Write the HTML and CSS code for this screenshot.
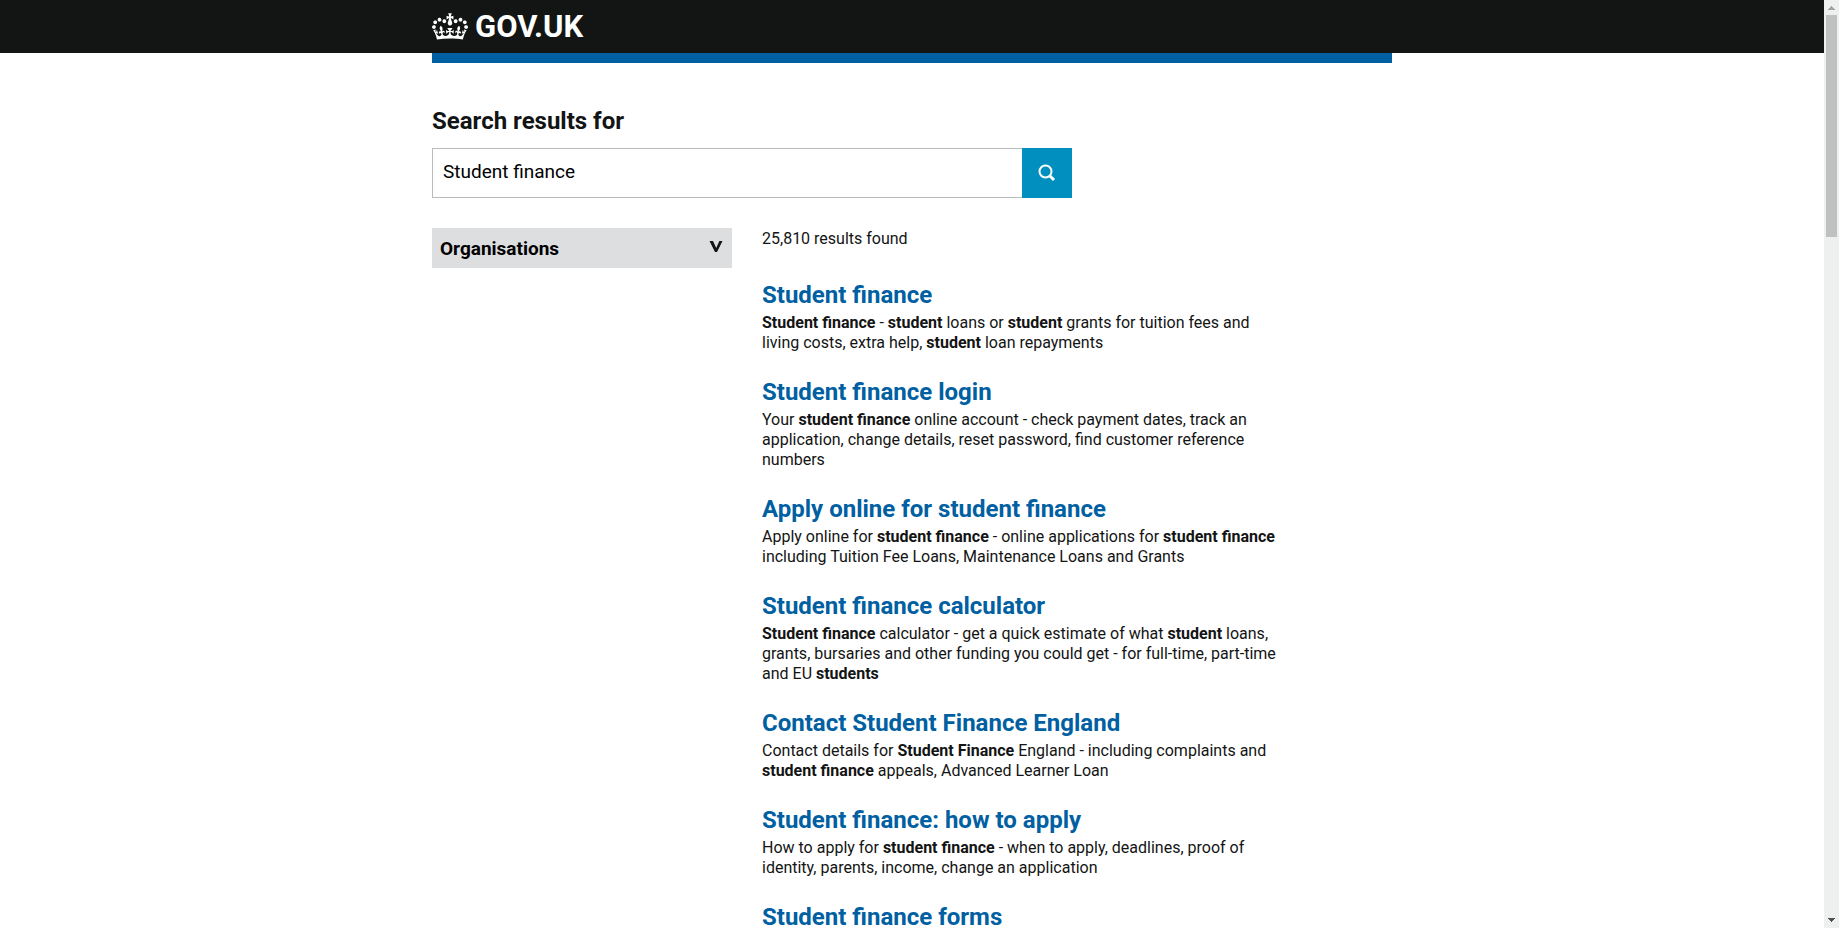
FILE: index.html
```html
<!DOCTYPE html>
<html lang="en">
<head>
<meta charset="utf-8">
<title>Student finance - Search - GOV.UK</title>
<link rel="stylesheet" href="styles.css">
</head>
<body>
<div class="page">
  <header class="header">
    <div class="container header-inner">
      <a class="logo" href="#">
        <svg class="crown" viewBox="0 0 132 97" aria-hidden="true"><path fill="currentColor" fill-rule="evenodd" d="M25 30.2c3.5 1.5 7.7-.2 9.1-3.7 1.5-3.6-.2-7.8-3.9-9.2-3.6-1.4-7.6.3-9.1 3.9-1.4 3.5.3 7.5 3.9 9zM9 39.5c3.6 1.5 7.8-.2 9.2-3.7 1.5-3.6-.2-7.8-3.9-9.1-3.6-1.5-7.6.2-9.1 3.8-1.4 3.5.3 7.5 3.8 9zM4.4 57.2c3.5 1.5 7.7-.2 9.1-3.8 1.5-3.6-.2-7.7-3.9-9.1-3.5-1.5-7.6.3-9.1 3.8-1.4 3.5.3 7.6 3.9 9.1zm38.3-21.4c3.5 1.5 7.7-.2 9.1-3.8 1.5-3.6-.2-7.7-3.9-9.1-3.6-1.5-7.6.3-9.1 3.8-1.3 3.6.4 7.7 3.9 9.1zm64.4-5.6c-3.6 1.5-7.8-.2-9.1-3.7-1.5-3.6.2-7.8 3.8-9.2 3.6-1.4 7.7.3 9.2 3.9 1.3 3.5-.4 7.5-3.9 9zm15.9 9.3c-3.6 1.5-7.7-.2-9.1-3.7-1.5-3.6.2-7.8 3.7-9.1 3.6-1.5 7.7.2 9.2 3.8 1.5 3.5-.3 7.5-3.8 9zm4.7 17.7c-3.6 1.5-7.8-.2-9.2-3.8-1.5-3.6.2-7.7 3.9-9.1 3.6-1.5 7.7.3 9.2 3.8 1.3 3.5-.4 7.6-3.9 9.1zM89.3 35.8c-3.6 1.5-7.8-.2-9.2-3.8-1.4-3.6.2-7.7 3.9-9.1 3.6-1.5 7.7.3 9.2 3.8 1.4 3.6-.3 7.7-3.9 9.1zM69.7 17.7l8.9 4.7V9.3l-8.9 2.8c-.2-.3-.5-.6-.9-.9L72.4 0H59.6l3.5 11.2c-.3.3-.6.5-.9.9l-8.8-2.8v13.1l8.8-4.7c.3.3.6.7.9.9l-5 15.4v.1c-.2.8-.4 1.6-.4 2.4 0 4.1 3.1 7.5 7 8.1h.2c.3 0 .7.1 1 .1.4 0 .7 0 1-.1h.2c4-.6 7.1-4.1 7.1-8.1 0-.8-.1-1.7-.4-2.4V34l-5.1-15.4c.4-.2.7-.6 1-.9zM66 92.8c16.9 0 32.8 1.1 47.1 3.2 4-16.9 8.9-26.7 14-33.5l-9.6-3.4c1 4.9 1.1 7.2 0 10.2-1.5-1.4-3-4.3-4.2-8.7L108.6 76c2.8-2 5-3.2 7.5-3.3-4.4 9.4-10 11.9-13.6 11.2-4.3-.8-6.3-4.6-5.6-7.9 1-4.7 5.7-5.9 8-.5 4.3-8.7-3-11.4-7.6-8.8 7.1-7.2 7.9-13.5 2.1-21.1-8 6.1-8.1 12.3-4.5 20.8-4.7-5.4-12.1-2.5-9.5 6.2 3.4-5.2 7.9-2 7.2 3.1-.6 4.3-6.4 7.8-13.5 7.2-10.3-.9-10.9-8-11.2-13.8 2.5-.5 7.1 1.8 11 7.3L80.2 60c-4.1 4.4-8 5.3-12.3 5.4 1.4-4.4 8-11.6 8-11.6H55.5s6.4 7.2 7.9 11.6c-4.2-.1-8-1-12.3-5.4l1.4 16.4c3.9-5.5 8.5-7.7 10.9-7.3-.3 5.8-.9 12.8-11.1 13.8-7.2.6-12.9-2.9-13.5-7.2-.7-5 3.8-8.3 7.1-3.1 2.7-8.7-4.6-11.6-9.4-6.2 3.7-8.5 3.6-14.7-4.6-20.8-5.8 7.6-5 13.9 2.2 21.1-4.7-2.6-11.9.1-7.7 8.8 2.3-5.5 7.1-4.2 8.1.5.7 3.3-1.3 7.1-5.7 7.9-3.5.7-9-1.8-13.5-11.2 2.5.1 4.7 1.3 7.5 3.3l-4.7-15.4c-1.2 4.4-2.7 7.2-4.3 8.7-1.1-3-.9-5.3 0-10.2l-9.5 3.4c5 6.9 9.9 16.7 14 33.5 14.8-2.1 30.8-3.2 47.7-3.2z"/></svg>
        <span>GOV.UK</span>
      </a>
    </div>
  </header>
  <div class="container"><div class="header-bar"></div></div>

  <main class="container main">
    <form class="search" role="search">
      <h1 class="search-title"><label for="q">Search results for</label></h1>
      <div class="search-row">
        <input class="search-input" id="q" type="text" value="Student finance">
        <button class="search-button" type="submit" aria-label="Search">
          <svg class="search-icon" viewBox="0 0 18 18" aria-hidden="true"><circle cx="7.5" cy="7.5" r="6" fill="none" stroke="currentColor" stroke-width="2"/><path d="M11.5 11.5l4.5 4.5" stroke="currentColor" stroke-width="3"/></svg>
        </button>
      </div>
    </form>

    <div class="columns">
      <aside>
        <button class="facet" type="button" aria-expanded="false">
          <span>Organisations</span>
          <svg class="chevron" viewBox="0 0 14 12" aria-hidden="true"><path fill="currentColor" d="M.5 0H4l3.200 7L10.400 0H13.500L8 11H6z"/></svg>
        </button>
      </aside>
      <section class="results">
        <p class="count">25,810 results found</p>
        <ul class="list">
          <li class="result">
            <h2 class="result-title"><a href="#">Student finance</a></h2>
            <p><b>Student finance</b> - <b>student</b> loans or <b>student</b> grants for tuition fees and living costs, extra help, <b>student</b> loan repayments</p>
          </li>
          <li class="result">
            <h2 class="result-title"><a href="#">Student finance login</a></h2>
            <p>Your <b>student finance</b> online account - check payment dates, track an application, change details, reset password, find customer reference numbers</p>
          </li>
          <li class="result">
            <h2 class="result-title"><a href="#">Apply online for student finance</a></h2>
            <p>Apply online for <b>student finance</b> - online applications for <b>student finance</b> including Tuition Fee Loans, Maintenance Loans and Grants</p>
          </li>
          <li class="result">
            <h2 class="result-title"><a href="#">Student finance calculator</a></h2>
            <p><b>Student finance</b> calculator - get a quick estimate of what <b>student</b> loans, grants, bursaries and other funding you could get - for full-time, part-time and EU <b>students</b></p>
          </li>
          <li class="result">
            <h2 class="result-title"><a href="#">Contact Student Finance England</a></h2>
            <p>Contact details for <b>Student Finance</b> England - including complaints and <b>student finance</b> appeals, Advanced Learner Loan</p>
          </li>
          <li class="result">
            <h2 class="result-title"><a href="#">Student finance: how to apply</a></h2>
            <p>How to apply for <b>student finance</b> - when to apply, deadlines, proof of identity, parents, income, change an application</p>
          </li>
          <li class="result">
            <h2 class="result-title"><a href="#">Student finance forms</a></h2>
          </li>
        </ul>
      </section>
    </div>
  </main>
</div>
<div class="scrollbar" aria-hidden="true">
  <svg class="arrow arrow-up" viewBox="0 0 7 4" shape-rendering="crispEdges"><path fill="currentColor" d="M3 0h1v1h1v1h1v1h1v1H0V3h1V2h1V1h1z"/></svg>
  <div class="track"><div class="thumb"></div></div>
  <svg class="arrow" viewBox="0 0 7 4" shape-rendering="crispEdges"><path fill="currentColor" d="M0 0h7v1H6v1H5v1H4v1H3V3H2V2H1V1H0z"/></svg>
</div>
</body>
</html>
```
FILE: styles.css
```css
* {
  box-sizing: border-box;
}

body {
  display: flex;
  height: 100vh;
  margin: 0;
  overflow: hidden;
  background: #fff;
  color: #131414;
  font-family: Roboto, "Liberation Sans", sans-serif;
  font-size: 16px;
  line-height: 20px;
}

h1,
h2,
p,
ul {
  margin: 0;
  padding: 0;
}

.page {
  flex: 1;
  overflow: hidden;
}

.container {
  max-width: 960px;
  margin: 0 auto;
}

.header {
  padding: 9px 0 8px;
  background: #131514;
}

.header-inner {
  display: flex;
}

.logo {
  display: flex;
  align-items: center;
  gap: 7px;
  color: #fff;
  font-size: 31px;
  font-weight: 700;
  line-height: 36px;
  text-decoration: none;
}

.crown {
  width: 36px;
  height: 27px;
  margin-bottom: 2px;
}

.header-bar {
  height: 10px;
  background: #0060a2;
}

.main {
  padding-top: 43px;
}

.search {
  max-width: 640px;
}

.search-title {
  margin-bottom: 12px;
  font-size: 24px;
  line-height: 30px;
}

.search-row {
  display: flex;
}

.search-input {
  flex: 1;
  min-width: 0;
  height: 50px;
  padding: 0 10px 4px;
  border: 1px solid #b8bcbc;
  border-right: 0;
  border-radius: 0;
  background: #fff;
  color: #000;
  font: 19px/24px Roboto, "Liberation Sans", sans-serif;
}

.search-button {
  display: flex;
  align-items: center;
  justify-content: center;
  width: 50px;
  height: 50px;
  padding: 0;
  border: 0;
  background: #008fbe;
  color: #fff;
}

.search-icon {
  width: 18px;
  height: 18px;
}

.columns {
  display: grid;
  grid-template-columns: 300px 1fr;
  gap: 30px;
  margin-top: 30px;
}

.facet {
  display: flex;
  justify-content: space-between;
  width: 100%;
  height: 40px;
  padding: 9px 9px 7px 8px;
  border: 0;
  background: #dddee0;
  color: #000;
  font: 700 19px/24px Roboto, "Liberation Sans", sans-serif;
}

.chevron {
  width: 14px;
  height: 12px;
  margin-top: 4px;
  color: #131414;
}

.results {
  max-width: 525px;
  padding-top: 1px;
}

.count {
  margin-bottom: 31px;
}

.list {
  list-style: none;
}

.result {
  margin-bottom: 24px;
}

.result-title {
  margin-bottom: 3px;
  font-size: 24px;
  line-height: 30px;
}

.result-title a {
  color: #0060a2;
  text-decoration: none;
}

.scrollbar {
  display: flex;
  flex-direction: column;
  align-items: center;
  width: 15px;
  background: #eef0ef;
  color: #505252;
}

.arrow {
  width: 7px;
  height: 4px;
  margin: 5px 0 6px;
}

.arrow-up {
  margin: 6px 0 5px;
  color: #a1a3a3;
}

.track {
  flex: 1;
}

.thumb {
  width: 11px;
  height: 222px;
  background: #bfc1c0;
}
```
